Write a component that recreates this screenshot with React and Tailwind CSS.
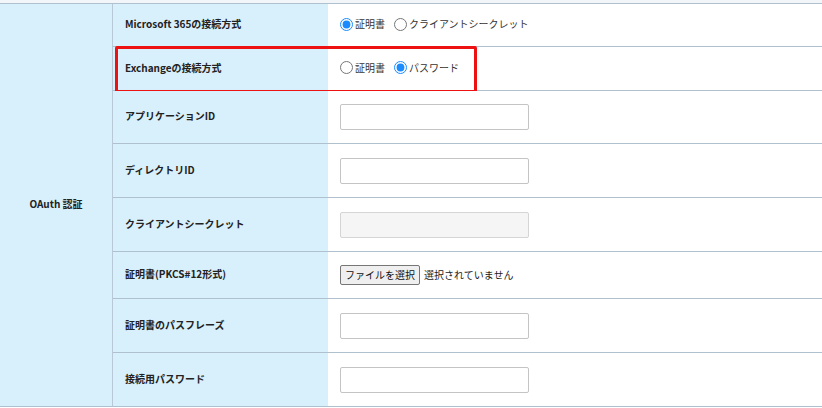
import React from 'react';

const font = { fontFamily: '"Noto Sans CJK JP", "Noto Sans", sans-serif' };

const Radio = ({ name, label, checked }) => (
    <label className="flex items-center mr-[9px]">
        <input type="radio" name={name} defaultChecked={checked} className="w-[13px] h-[13px] m-0 accent-[#1a8cff]" />
        <span className="ml-[2px] text-[#333]">{label}</span>
    </label>
);

const TextBox = ({ disabled }) => (
    <input
        type="text"
        disabled={disabled}
        className={`w-[189px] h-[26px] rounded-[2px] border outline-none ${disabled ? 'bg-[#f5f5f5] border-[#d5d5d5]' : 'bg-white border-[#c4c4c4]'}`}
    />
);

const Row = ({ label, height, children, highlight, radios }) => (
    <div className={`relative flex border-b border-[#afc1cf] ${height}`}>
        <div className="w-[215px] shrink-0 bg-[#d8effc] flex items-center pl-[12px] pb-[2px] font-bold text-[#222]">
            {label}
        </div>
        <div className={`flex-1 flex items-center pl-[12px] bg-white ${radios ? 'pb-[2px]' : ''}`}>
            {children}
        </div>
        {highlight && (
            <div className="absolute left-[2px] top-[-1px] w-[362px] h-[47px] border-[3px] border-[#ee1111] rounded-[2px] pointer-events-none" />
        )}
    </div>
);

const App = () => {
    return (
        <div className="w-[822px] h-[408px] bg-white text-[10px] leading-none overflow-hidden" style={font}>
            <div className="h-[3px] bg-[#f3f6f8]" />
            <div className="flex border-t border-[#afc1cf]">
                <div className="w-[113px] shrink-0 bg-[#d8effc] border-r border-[#b7c9d6] border-b border-b-[#afc1cf] flex items-center justify-center pb-[2px] font-bold text-[#222]">
                    OAuth 認証
                </div>
                <div className="flex-1 flex flex-col">
                    <Row label="Microsoft 365の接続方式" height="h-[43px]" radios>
                        <Radio name="m365" label="証明書" checked />
                        <Radio name="m365" label="クライアントシークレット" />
                    </Row>
                    <Row label="Exchangeの接続方式" height="h-[44px]" highlight radios>
                        <Radio name="exo" label="証明書" />
                        <Radio name="exo" label="パスワード" checked />
                    </Row>
                    <Row label="アプリケーションID" height="h-[53px]">
                        <TextBox />
                    </Row>
                    <Row label="ディレクトリID" height="h-[54px]">
                        <TextBox />
                    </Row>
                    <Row label="クライアントシークレット" height="h-[54px]">
                        <TextBox disabled />
                    </Row>
                    <Row label="証明書(PKCS#12形式)" height="h-[47px]">
                        <div className="flex items-center">
                            <button className="h-[20px] px-[4px] border border-[#767676] rounded-[2px] bg-[#efefef] text-[#111]">
                                ファイルを選択
                            </button>
                            <span className="ml-[4px] text-[#222]">選択されていません</span>
                        </div>
                    </Row>
                    <Row label="証明書のパスフレーズ" height="h-[54px]">
                        <TextBox />
                    </Row>
                    <Row label="接続用パスワード" height="h-[54px]">
                        <TextBox />
                    </Row>
                </div>
            </div>
        </div>
    );
};

export default App;
